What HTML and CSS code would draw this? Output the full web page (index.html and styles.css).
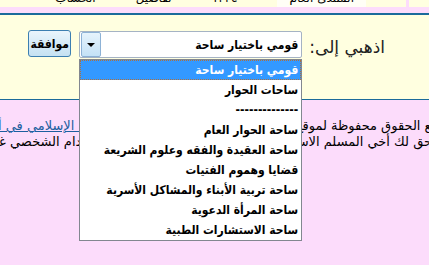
FILE: index.html
```html
<!DOCTYPE html>
<html lang="ar" dir="rtl">

<head>
    <meta charset="UTF-8">
    <meta name="viewport" content="width=device-width, initial-scale=1.0">
    <link rel="stylesheet" href="styles.css">
    <title>اذهبي إلى</title>
</head>

<body>
    <div class="top-row">
        <div class="top-cell side"></div>
        <div class="top-cell main">
            <span class="stat wide">المنتدى العام</span>
            <span class="stat">١٢٣٤</span>
            <span class="stat">تفاصيل</span>
            <span class="stat">الحساب</span>
        </div>
    </div>

    <div class="jump-bar">
        <form class="jump-form">
            <label for="forum">اذهبي إلى:</label>
            <div class="combo" id="forum">
                <div class="combo-box">
                    <span class="combo-text">قومي باختيار ساحة</span>
                    <span class="combo-arrow"></span>
                </div>
                <ul class="combo-list">
                    <li class="selected">قومي باختيار ساحة</li>
                    <li>ساحات الحوار</li>
                    <li>--------------</li>
                    <li>ساحة الحوار العام</li>
                    <li>ساحة العقيدة والفقه وعلوم الشريعة</li>
                    <li>قضايا وهموم الفتيات</li>
                    <li>ساحة تربية الأبناء والمشاكل الأسرية</li>
                    <li>ساحة المرأة الدعوية</li>
                    <li>ساحة الاستشارات الطبية</li>
                </ul>
            </div>
            <button type="button">موافقة</button>
        </form>
    </div>

    <div class="copyright">
        <p class="line first">
            <span>جميع الحقوق محفوظة لموقع</span>
            <a href="#">منتديات الشبكة الإسلامي في أرض</a>
        </p>
        <p class="line second">
            <span>يحق لك أخي المسلم الاستفادة</span>
            <span>للاستخدام الشخصي غير</span>
        </p>
    </div>
</body>

</html>
```

FILE: styles.css
```css
html,
body {
    height: 100%;
}

body {
    margin: 0;
    font-family: "DejaVu Sans", sans-serif;
    background-color: #fcdcfb;
    overflow: hidden;
    color: #000;
}

/* top table remains */
.top-row {
    display: flex;
    height: 7px;
    overflow: hidden;
}

.top-cell {
    background-color: #ffffe0;
    overflow: hidden;
}

.top-cell.side {
    width: 20px;
    margin-left: 3px;
}

.top-cell.main {
    flex: 1;
    display: flex;
    gap: 40px;
    padding-right: 40px;
    font-size: 12px;
    line-height: 14px;
}

.stat {
    margin-top: -9px;
    white-space: nowrap;
}

.stat.wide {
    background-color: #fffff6;
    padding: 0 12px;
}

/* jump menu */
.jump-bar {
    margin-top: 6px;
    height: 84px;
    background-color: #ffffe0;
    border-top: 2px solid #1b6b9b;
    border-bottom: 1px solid #1b6b9b;
}

.jump-form {
    display: flex;
    align-items: center;
    padding: 16px 44px 0 0;
    gap: 7px;
}

label {
    font-size: 17px;
    color: #222;
    padding-top: 4px;
}

.combo {
    position: relative;
    width: 223px;
}

.combo-box {
    display: flex;
    align-items: center;
    justify-content: space-between;
    height: 25px;
    background-color: #fff;
    border: 1px solid #a5b3c4;
    border-radius: 2px;
}

.combo-text {
    font-family: "DejaVu Sans Condensed", "DejaVu Sans", sans-serif;
    font-size: 12px;
    font-weight: bold;
    padding-right: 3px;
}

.combo-arrow {
    position: relative;
    width: 18px;
    height: 23px;
    margin-left: 1px;
    background: linear-gradient(#e6f3fc, #c4e2f7);
    border: 1px solid #8db2d6;
    border-radius: 2px;
}

.combo-arrow::after {
    content: "";
    position: absolute;
    left: 5px;
    top: 10px;
    border-left: 4px solid transparent;
    border-right: 4px solid transparent;
    border-top: 4px solid #000;
}

.combo-list {
    position: absolute;
    top: 28px;
    left: 0;
    right: 0;
    margin: 0;
    padding: 0;
    list-style: none;
    background-color: #fff;
    border: 1px solid #828790;
    font-family: "DejaVu Sans Condensed", "DejaVu Sans", sans-serif;
    font-size: 12px;
    font-weight: bold;
    z-index: 2;
}

.combo-list li {
    height: 20px;
    line-height: 20px;
    padding-right: 3px;
    white-space: nowrap;
}

.combo-list li.selected {
    background-color: #3399ff;
    color: #fff;
    outline: 1px dotted #b0703a;
    outline-offset: -1px;
}

button {
    width: 43px;
    height: 27px;
    margin-right: 1px;
    margin-top: -2px;
    padding: 0;
    font-family: "DejaVu Sans Condensed", "DejaVu Sans", sans-serif;
    font-size: 12px;
    font-weight: bold;
    background: linear-gradient(#eaf5fc, #d6ebf7 50%, #c5e1f2);
    border: 1px solid #3c7fb1;
    border-radius: 3px;
}

/* copyright */
.copyright {
    padding-top: 18px;
    font-size: 13px;
}

.line {
    display: flex;
    justify-content: space-between;
    margin: 0;
    line-height: 16px;
    white-space: nowrap;
}

.line.first {
    margin: 0 -22px 0 -24px;
}

.line.second {
    margin: 0 -7px 0 -12px;
}

.line a {
    color: #1d5f9f;
}
```
